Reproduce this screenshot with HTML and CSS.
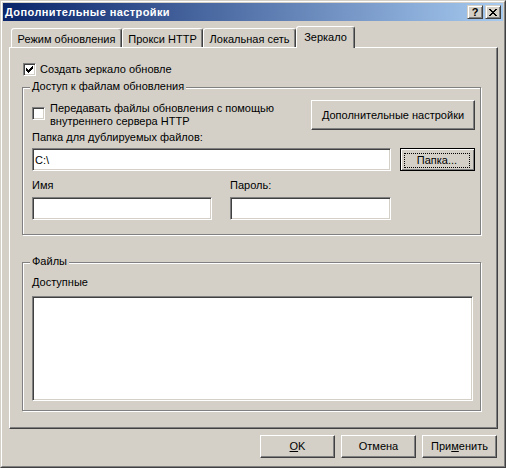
FILE: index.html
```html
<!DOCTYPE html>
<html lang="ru">
<head>
<meta charset="utf-8">
<title>Дополнительные настройки</title>
<link rel="stylesheet" href="styles.css">
</head>
<body>
<div class="window">
  <div class="frame">
    <div class="titlebar">
      <span class="title">Дополнительные настройки</span>
      <div class="caption-btns">
        <span class="cbtn help">?</span>
        <span class="cbtn close">
          <svg width="8" height="7" viewBox="0 0 8 7" shape-rendering="crispEdges"><path d="M0 0h2v1h-2zM6 0h2v1h-2zM1 1h2v1h-2zM5 1h2v1h-2zM2 2h4v1h-4zM3 3h2v1h-2zM2 4h4v1h-4zM1 5h2v1h-2zM5 5h2v1h-2zM0 6h2v1h-2zM6 6h2v1h-2z" fill="#000"/></svg>
        </span>
      </div>
    </div>

    <div class="tabs">
      <div class="tab t1">Режим обновления</div>
      <div class="tab t2">Прокси HTTP</div>
      <div class="tab t3">Локальная сеть</div>
      <div class="tab active t4">Зеркало</div>
    </div>

    <div class="panel">
      <div class="check-row main-check">
        <span class="checkbox">
          <svg width="7" height="7" viewBox="0 0 7 7" shape-rendering="crispEdges"><path d="M0 2h1v3h-1zM1 3h1v3h-1zM2 4h1v3h-1zM3 3h1v3h-1zM4 2h1v3h-1zM5 1h1v3h-1zM6 0h1v3h-1z" fill="#000"/></svg>
        </span>
        <span class="check-text">Создать зеркало обновле</span>
      </div>

      <div class="group g1">
        <span class="legend">Доступ к файлам обновления</span>
        <div class="row-a">
          <div class="check-row multi">
            <span class="checkbox"></span>
            <span class="multi-text">Передавать файлы обновления с помощью<br>внутреннего сервера HTTP</span>
          </div>
          <button class="btn adv">Дополнительные настройки</button>
        </div>
        <div class="lbl folder-lbl">Папка для дублируемых файлов:</div>
        <div class="row-field">
          <div class="edit folder">C:\</div>
          <button class="btn default browse"><span class="focus">Папка...</span></button>
        </div>
        <div class="cred">
          <div class="col name">
            <div class="lbl">Имя</div>
            <div class="edit"></div>
          </div>
          <div class="col pass">
            <div class="lbl">Пароль:</div>
            <div class="edit"></div>
          </div>
        </div>
      </div>

      <div class="group g2">
        <span class="legend">Файлы</span>
        <div class="lbl">Доступные</div>
        <div class="listbox"></div>
      </div>
    </div>

    <div class="buttons">
      <button class="btn"><u>O</u>K</button>
      <button class="btn">Отмена</button>
      <button class="btn">При<u>м</u>енить</button>
    </div>
  </div>
</div>
</body>
</html>
```

FILE: styles.css
```css
* { box-sizing: border-box; }
html, body { margin: 0; padding: 0; }
body {
  background: #d4d0c8;
  font-family: "Liberation Sans", Arial, sans-serif;
  font-size: 11px;
  color: #000;
}

.window {
  width: 506px;
  height: 468px;
  border: 1px solid;
  border-color: #d4d0c8 #404040 #404040 #d4d0c8;
  background: #d4d0c8;
}
.frame {
  height: 100%;
  border: 1px solid;
  border-color: #fff #808080 #808080 #fff;
  padding: 1px;
  display: flex;
  flex-direction: column;
}

/* title bar */
.titlebar {
  flex: none;
  height: 18px;
  display: flex;
  align-items: center;
  justify-content: space-between;
  padding: 0 2px 0 2px;
  background: linear-gradient(to right, #0a246a, #a6caf0);
}
.title {
  color: #fff;
  font-weight: bold;
  font-size: 11px;
  letter-spacing: 0.4px;
  line-height: 18px;
  white-space: nowrap;
}
.caption-btns { display: flex; gap: 2px; }
.cbtn {
  width: 16px;
  height: 14px;
  display: flex;
  align-items: center;
  justify-content: center;
  background: #d4d0c8;
  border: 1px solid;
  border-color: #d4d0c8 #404040 #404040 #d4d0c8;
  box-shadow: inset 1px 1px #fff, inset -1px -1px #808080;
}
.cbtn.help {
  font-weight: bold;
  font-size: 11px;
  line-height: 12px;
}
.cbtn svg { display: block; }

/* tabs */
.tabs {
  flex: none;
  height: 26px;
  display: flex;
  align-items: flex-end;
  padding-left: 8px;
}
.tab {
  height: 19px;
  border: 1px solid;
  border-bottom: none;
  border-color: #fff #404040 transparent #fff;
  border-radius: 3px 3px 0 0;
  box-shadow: inset -1px 0 #808080;
  background: #d4d0c8;
  text-align: center;
  line-height: 13px;
  padding-top: 4px;
  white-space: nowrap;
}
.t1 { width: 111px; }
.t2 { width: 81px; }
.t3 { width: 93px; }
.t4 { width: 59px; }
.tab.active {
  height: 22px;
  margin-bottom: -1px;
  padding-top: 4px;
  position: relative;
  z-index: 1;
}

/* panel */
.panel {
  flex: none;
  height: 382px;
  margin: 0 5px 0 6px;
  border: 1px solid;
  border-color: #fff #404040 #404040 #fff;
  box-shadow: inset -1px -1px #808080;
  padding: 0 0 0 12px;
}

.check-row { display: flex; align-items: center; }
.main-check {
  margin-top: 15px;
  margin-left: 1px;
  height: 13px;
  gap: 4px;
  line-height: 13px;
}
.checkbox {
  flex: none;
  width: 13px;
  height: 13px;
  background: #fff;
  border: 1px solid;
  border-color: #808080 #fff #fff #808080;
  box-shadow: inset 1px 1px #404040, inset -1px -1px #d4d0c8;
  padding: 2px;
}
.checkbox svg { display: block; }

.group {
  position: relative;
  width: 459px;
  border: 1px solid #808080;
  box-shadow: inset 1px 1px #fff, 1px 1px #fff;
}
.legend {
  position: absolute;
  top: -8px;
  left: 7px;
  padding: 0 2px;
  background: #d4d0c8;
  line-height: 13px;
  white-space: nowrap;
}
.g1 {
  margin-top: 11px;
  height: 148px;
  padding: 12px 5px 0 9px;
}
.row-a {
  height: 30px;
  display: flex;
  align-items: center;
  justify-content: space-between;
}
.check-row.multi { align-items: flex-start; gap: 5px; }
.multi .checkbox { margin-top: 5px; }
.multi-text { line-height: 13px; white-space: nowrap; }

.lbl { line-height: 13px; white-space: nowrap; }
.folder-lbl { margin-top: 1px; }

.row-field {
  margin-top: 4px;
  height: 23px;
  display: flex;
  justify-content: space-between;
}
.edit {
  height: 23px;
  background: #fff;
  border: 1px solid;
  border-color: #808080 #fff #fff #808080;
  box-shadow: inset 1px 1px #404040, inset -1px -1px #d4d0c8;
  display: flex;
  align-items: center;
  padding-left: 2px;
  white-space: nowrap;
}
.edit.folder { width: 359px; }

.cred { margin-top: 8px; display: flex; gap: 18px; }
.col.name { width: 180px; }
.col.pass { width: 161px; }
.col .edit { margin-top: 5px; }

.g2 {
  margin-top: 27px;
  height: 149px;
  padding: 13px 0 0 9px;
}
.listbox {
  margin-top: 7px;
  width: 441px;
  height: 105px;
  background: #fff;
  border: 1px solid;
  border-color: #808080 #fff #fff #808080;
  box-shadow: inset 1px 1px #404040, inset -1px -1px #d4d0c8;
}

/* buttons */
.btn {
  font-family: inherit;
  font-size: 11px;
  color: #000;
  margin: 0;
  padding: 0;
  height: 23px;
  width: 75px;
  background: #d4d0c8;
  border: 1px solid;
  border-color: #fff #404040 #404040 #fff;
  box-shadow: inset -1px -1px #808080;
  line-height: 13px;
  text-align: center;
  white-space: nowrap;
}
.btn.adv { width: 164px; height: 30px; }
.btn.default {
  border-color: #000;
  box-shadow: inset 1px 1px #fff, inset -1px -1px #808080;
  display: flex;
  align-items: stretch;
  padding: 4px 4px 2px 3px;
}
.btn.default .focus {
  flex: 1;
  border: 1px dotted #000;
  display: flex;
  align-items: center;
  justify-content: center;
}
.btn u { text-decoration: underline; text-underline-offset: 1px; }

.buttons {
  flex: none;
  margin-top: 6px;
  display: flex;
  justify-content: flex-end;
  gap: 6px;
  padding-right: 6px;
}
```
